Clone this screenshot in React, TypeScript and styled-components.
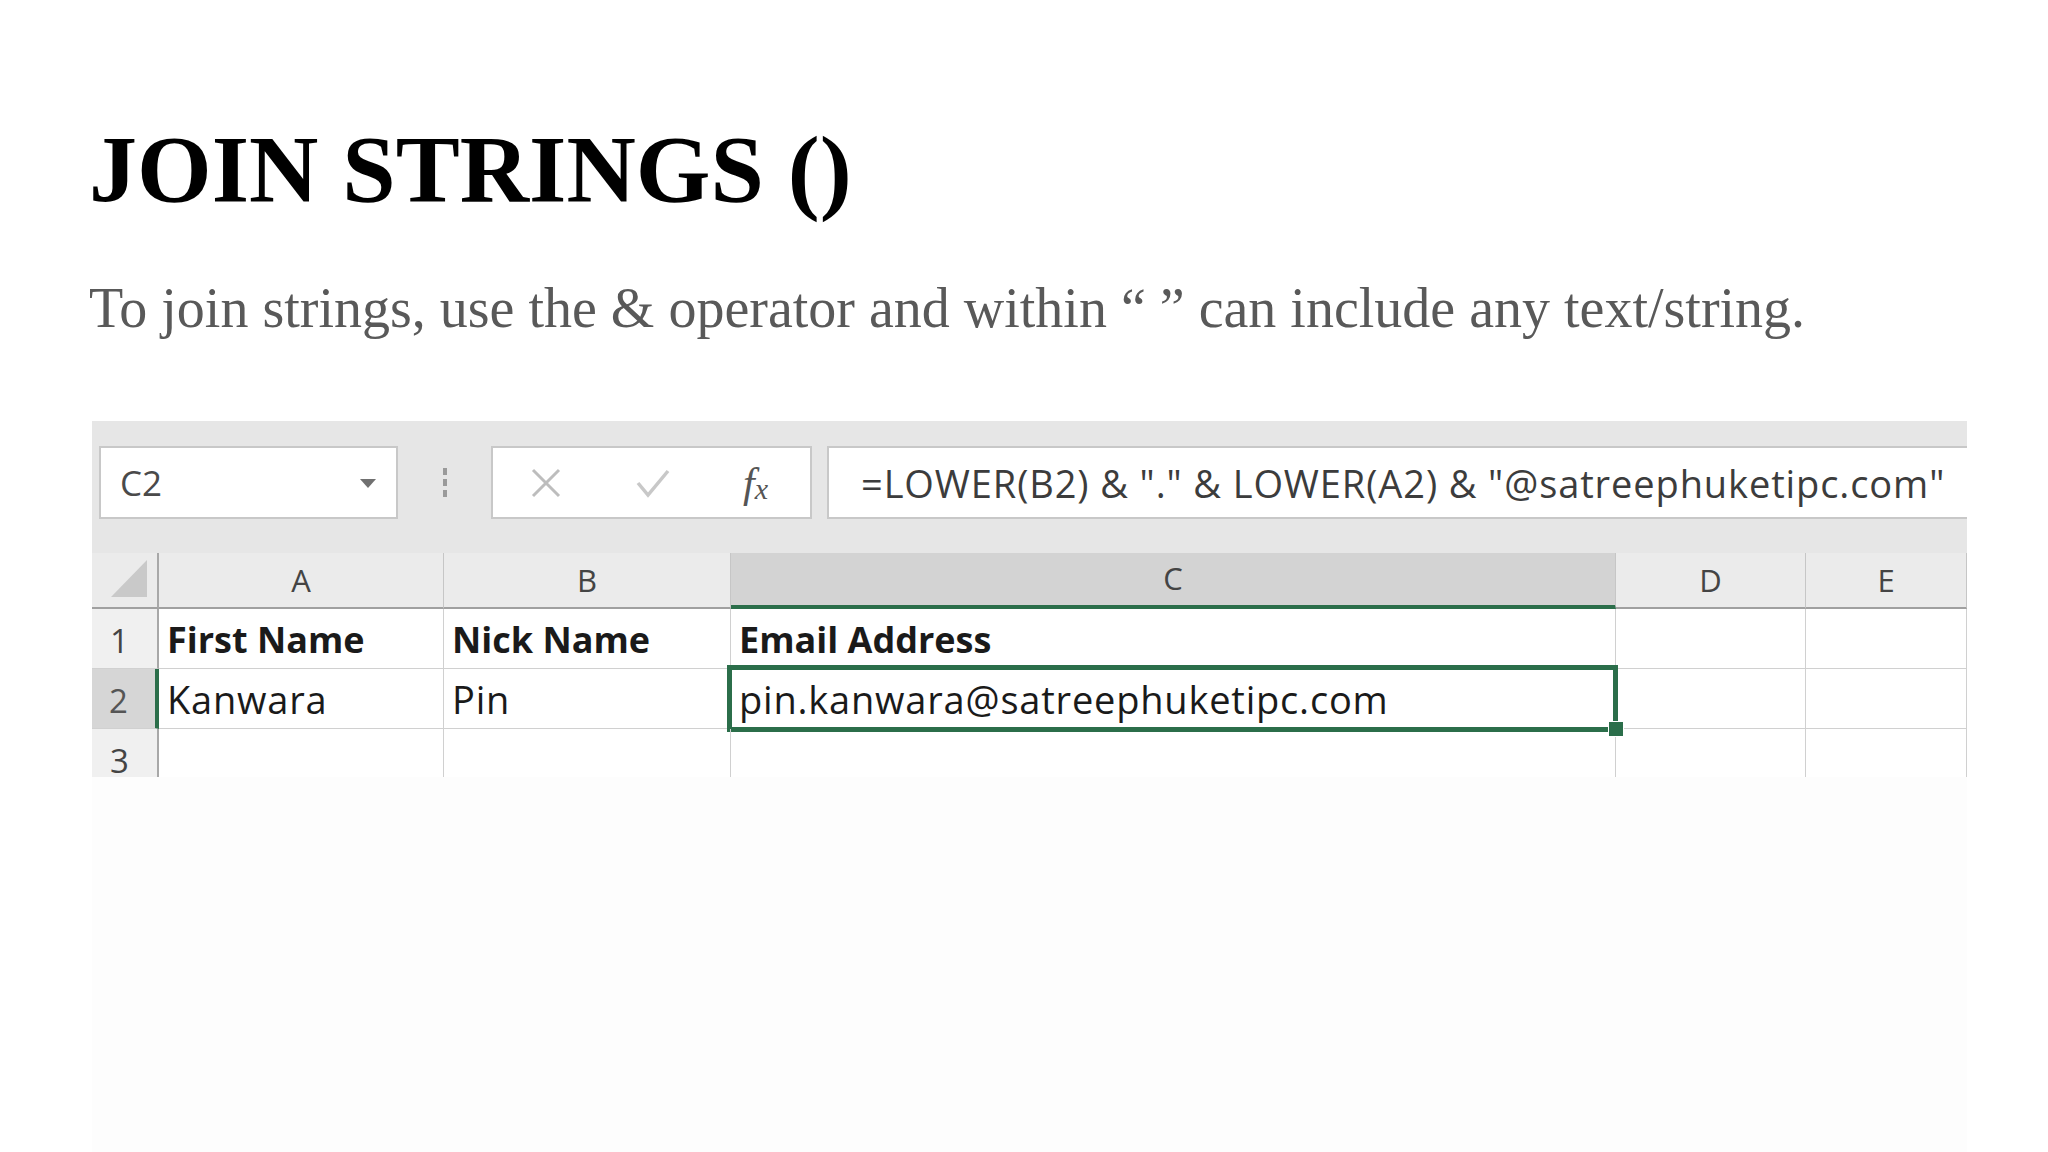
import React from "react";
import styled, { createGlobalStyle } from "styled-components";

const green = "#2b6e4a";

const columns = [
  { label: "", width: 67 },
  { label: "A", width: 285 },
  { label: "B", width: 287 },
  { label: "C", width: 885 },
  { label: "D", width: 190 },
  { label: "E", width: 161 },
];

const rows = [
  { num: "1", cells: ["First Name", "Nick Name", "Email Address", "", ""], bold: true, height: 60 },
  { num: "2", cells: ["Kanwara", "Pin", "pin.kanwara@satreephuketipc.com", "", ""], bold: false, height: 60 },
  { num: "3", cells: ["", "", "", "", ""], bold: false, height: 48 },
];

const GlobalStyle = createGlobalStyle`
  html, body {
    margin: 0;
    padding: 0;
    background: #ffffff;
  }
`;

const App = () => {
  return (
    <>
      <GlobalStyle />
      <Slide>
        <Title>JOIN STRINGS ()</Title>
        <Lead>To join strings, use the &amp; operator and within “ ” can include any text/string.</Lead>

        <Sheet>
          <Toolbar>
            <NameBox>
              C2
              <DropArrow />
            </NameBox>
            <Grip>
              <span />
              <span />
              <span />
            </Grip>
            <ActionBox>
              <svg width="34" height="30" viewBox="0 0 34 30">
                <path d="M4 2 L30 28 M30 2 L4 28" stroke="#bdbdbd" strokeWidth="3" fill="none" />
              </svg>
              <svg width="36" height="30" viewBox="0 0 36 30">
                <path d="M3 15 L13 27 L33 3" stroke="#c8c8c8" strokeWidth="3.5" fill="none" />
              </svg>
              <FxLabel>
                f<small>x</small>
              </FxLabel>
            </ActionBox>
            <FormulaBox>=LOWER(B2) &amp; "." &amp; LOWER(A2) &amp; "@satreephuketipc.com"</FormulaBox>
          </Toolbar>

          <Grid>
            {columns.map((col, i) =>
              i === 0 ? (
                <CornerCell key="corner">
                  <svg width="36" height="37" viewBox="0 0 36 37">
                    <polygon points="36,0 36,37 0,37" fill="#c9c9c9" />
                  </svg>
                </CornerCell>
              ) : (
                <ColHeader key={col.label} $selected={col.label === "C"}>
                  {col.label}
                </ColHeader>
              )
            )}

            {rows.map((row) => (
              <React.Fragment key={row.num}>
                <RowHeader $selected={row.num === "2"} $last={row.num === "3"}>
                  {row.num}
                </RowHeader>
                {row.cells.map((text, ci) => (
                  <Cell
                    key={ci}
                    $bold={row.bold}
                    $last={row.num === "3"}
                    $active={row.num === "2" && ci === 2}
                  >
                    {text}
                    {row.num === "2" && ci === 2 && <FillHandle />}
                  </Cell>
                ))}
              </React.Fragment>
            ))}
          </Grid>

          <Filler />
        </Sheet>
      </Slide>
    </>
  );
};

const Slide = styled.div`
  display: flex;
  flex-direction: column;
  width: 2048px;
  height: 1152px;
  padding-left: 89px;
  box-sizing: border-box;
  overflow: hidden;
`;

const Title = styled.h1`
  margin: 122px 0 0;
  font-family: "Liberation Serif", "Times New Roman", serif;
  font-weight: bold;
  font-size: 96px;
  line-height: 96px;
  color: #000000;
`;

const Lead = styled.p`
  margin: 62px 0 0;
  font-family: "Liberation Serif", "Times New Roman", serif;
  font-size: 56px;
  line-height: 56px;
  color: #595959;
`;

const Sheet = styled.div`
  flex: 1;
  display: flex;
  flex-direction: column;
  width: 1875px;
  margin: 85px 0 0 3px;
  font-family: "Open Sans", "Noto Sans", sans-serif;
`;

const Toolbar = styled.div`
  display: flex;
  align-items: flex-start;
  height: 132px;
  padding: 25px 0 0 7px;
  box-sizing: border-box;
  background: #e6e6e6;
`;

const InputBox = styled.div`
  display: flex;
  align-items: center;
  height: 73px;
  box-sizing: border-box;
  background: #ffffff;
  border: 2px solid #c8c8c8;
`;

const NameBox = styled(InputBox)`
  position: relative;
  width: 299px;
  padding-left: 19px;
  font-size: 35px;
  color: #4a4a4a;
`;

const DropArrow = styled.span`
  position: absolute;
  right: 20px;
  top: 31px;
  width: 0;
  height: 0;
  border-left: 8px solid transparent;
  border-right: 8px solid transparent;
  border-top: 9px solid #707070;
`;

const Grip = styled.div`
  display: flex;
  flex-direction: column;
  align-items: center;
  justify-content: center;
  gap: 4px;
  width: 93px;
  height: 73px;

  span {
    width: 4px;
    height: 7px;
    background: #9a9a9a;
  }
`;

const ActionBox = styled(InputBox)`
  gap: 72px;
  width: 321px;
  padding-left: 36px;
`;

const FxLabel = styled.span`
  font-family: "Liberation Serif", "Times New Roman", serif;
  font-style: italic;
  font-size: 42px;
  color: #555555;
  line-height: 1;

  small {
    font-size: 30px;
    position: relative;
    top: 2px;
  }
`;

const FormulaBox = styled(InputBox)`
  flex: 1;
  margin-left: 15px;
  padding-left: 32px;
  border-right: none;
  font-size: 38px;
  letter-spacing: 0.9px;
  color: #3c3c3c;
  white-space: nowrap;
  overflow: hidden;
`;

const Grid = styled.div`
  display: grid;
  grid-template-columns: ${columns.map((c) => `${c.width}px`).join(" ")};
  grid-template-rows: 56px ${rows.map((r) => `${r.height}px`).join(" ")};
  background: #ffffff;
`;

const CornerCell = styled.div`
  display: flex;
  align-items: flex-end;
  justify-content: flex-end;
  padding: 0 10px 10px 0;
  background: #ebebeb;
  border-right: 2px solid #a8a8a8;
  border-bottom: 2px solid #a0a0a0;
`;

const ColHeader = styled.div<{ $selected: boolean }>`
  display: flex;
  align-items: flex-end;
  justify-content: center;
  padding-bottom: 11px;
  box-sizing: border-box;
  font-size: 31px;
  line-height: 1;
  color: #444444;
  background: ${(p) => (p.$selected ? "#d3d3d3" : "#ebebeb")};
  border-right: 1px solid #c6c6c6;
  border-bottom: ${(p) => (p.$selected ? `4px solid ${green}` : "2px solid #a0a0a0")};
`;

const RowHeader = styled.div<{ $selected: boolean; $last: boolean }>`
  display: flex;
  align-items: flex-end;
  justify-content: center;
  padding: 0 10px ${(p) => (p.$last ? "0" : "11px")} 0;
  box-sizing: border-box;
  font-size: 33px;
  line-height: 1;
  color: ${(p) => (p.$selected ? "#555555" : "#444444")};
  background: ${(p) => (p.$selected ? "#d6d6d6" : "#f0f0f0")};
  border-right: ${(p) => (p.$selected ? `4px solid ${green}` : "2px solid #a8a8a8")};
  border-bottom: ${(p) => (p.$last ? "none" : "1px solid #d0d0d0")};
`;

const Cell = styled.div<{ $bold: boolean; $last: boolean; $active: boolean }>`
  position: relative;
  display: flex;
  align-items: flex-end;
  padding: 0 0 10px 8px;
  box-sizing: border-box;
  font-size: ${(p) => (p.$bold ? "36px" : "38px")};
  letter-spacing: ${(p) => (p.$bold ? "0" : "0.8px")};
  line-height: 1;
  font-weight: ${(p) => (p.$bold ? 700 : 400)};
  color: #1a1a1a;
  white-space: nowrap;
  border-right: 1px solid #d0d0d0;
  border-bottom: ${(p) => (p.$last ? "none" : "1px solid #d0d0d0")};

  ${(p) =>
    p.$active &&
    `
    &::after {
      content: "";
      position: absolute;
      left: -4px;
      top: -4px;
      right: -3px;
      bottom: -4px;
      border: 5px solid ${green};
      pointer-events: none;
    }
  `}
`;

const FillHandle = styled.span`
  position: absolute;
  right: -9px;
  bottom: -9px;
  width: 14px;
  height: 14px;
  background: ${green};
  border: 1px solid #ffffff;
  z-index: 1;
`;

const Filler = styled.div`
  flex: 1;
  background: #fdfdfd;
`;

export default App;
